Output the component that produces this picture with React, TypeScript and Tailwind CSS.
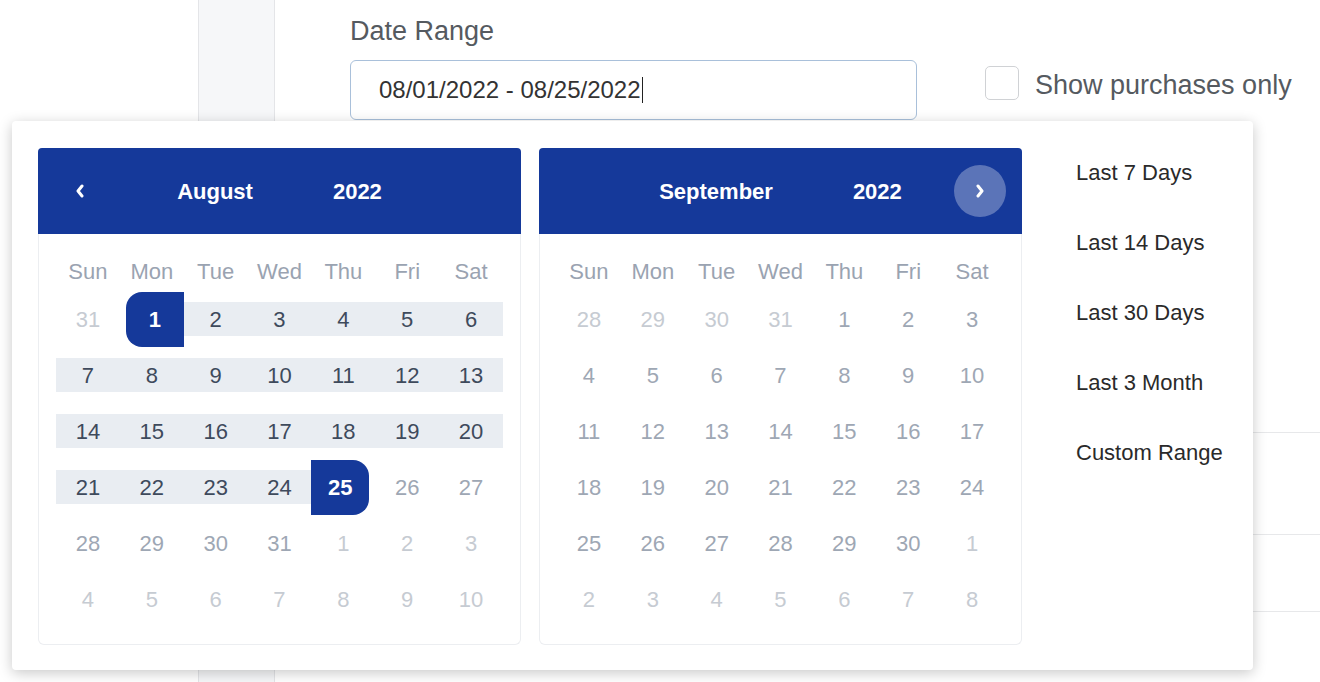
import type { ReactNode } from 'react';

type Cell = { d: number; out?: boolean };
type Mode = 'start' | 'end' | 'in' | 'none';

const DOW = ['Sun', 'Mon', 'Tue', 'Wed', 'Thu', 'Fri', 'Sat'];
const PRESETS = ['Last 7 Days', 'Last 14 Days', 'Last 30 Days', 'Last 3 Month', 'Custom Range'];

const build = (prev: number[], count: number, next: number): Cell[] => {
  const cells: Cell[] = prev.map((d) => ({ d, out: true }));
  for (let i = 1; i <= count; i++) cells.push({ d: i });
  for (let i = 1; cells.length < 42 && i <= next; i++) cells.push({ d: i, out: true });
  return cells;
};

const august = build([31], 31, 10);
const september = build([28, 29, 30, 31], 30, 8);

const Chevron = ({ dir }: { dir: 'left' | 'right' }) => (
  <svg width="10" height="14" viewBox="0 0 10 14" fill="none">
    <path
      d={dir === 'left' ? 'M7 2 L3 7 L7 12' : 'M3 2 L7 7 L3 12'}
      stroke="white"
      strokeWidth="3"
      strokeLinecap="round"
      strokeLinejoin="round"
    />
  </svg>
);

const DayCell = ({ cell, mode, muted }: { cell: Cell; mode: Mode; muted: boolean }) => {
  if (mode === 'start' || mode === 'end') {
    return (
      <div className="relative flex h-[56px] items-center justify-center">
        <div
          className={
            mode === 'start'
              ? 'absolute right-0 left-1/2 top-1/2 h-[34px] -translate-y-1/2 bg-[#e9edf2]'
              : 'absolute left-0 right-1/2 top-1/2 h-[34px] -translate-y-1/2 bg-[#e9edf2]'
          }
        />
        <div
          className={
            mode === 'start'
              ? 'relative ml-[6px] flex h-[55px] w-[58px] items-center justify-center rounded-l-[16px] bg-[#15399a] font-bold text-white'
              : 'relative mr-[6px] flex h-[55px] w-[58px] items-center justify-center rounded-r-[16px] bg-[#15399a] font-bold text-white'
          }
        >
          {cell.d}
        </div>
      </div>
    );
  }
  const color = cell.out ? 'text-[#c6cbd2]' : mode === 'in' ? 'text-[#3e4a5c]' : muted ? 'text-[#9ea7b4]' : 'text-[#9ea7b4]';
  return (
    <div className="flex h-[56px] items-center">
      <div
        className={
          mode === 'in'
            ? `flex h-[34px] w-full items-center justify-center bg-[#e9edf2] ${color}`
            : `flex h-[34px] w-full items-center justify-center ${color}`
        }
      >
        {cell.d}
      </div>
    </div>
  );
};

const Calendar = ({
  month,
  cells,
  range,
  nav,
}: {
  month: string;
  cells: Cell[];
  range?: [number, number];
  nav: 'left' | 'right';
}) => {
  const modeFor = (c: Cell): Mode => {
    if (!range || c.out) return 'none';
    if (c.d === range[0]) return 'start';
    if (c.d === range[1]) return 'end';
    if (c.d > range[0] && c.d < range[1]) return 'in';
    return 'none';
  };
  return (
    <div className="flex w-[483px] flex-col">
      <div className="flex h-[86px] items-center rounded-t-[4px] bg-[#15399a] px-[16px] text-[22px] font-bold text-white">
        <div
          className={
            nav === 'left'
              ? 'flex h-[52px] w-[52px] items-center justify-center rounded-full'
              : 'h-[52px] w-[52px]'
          }
        >
          {nav === 'left' && <Chevron dir="left" />}
        </div>
        <div className="flex flex-1 items-center justify-center gap-[80px]">
          <span>{month}</span>
          <span>2022</span>
        </div>
        <div
          className={
            nav === 'right'
              ? 'flex h-[52px] w-[52px] items-center justify-center rounded-full bg-white/30'
              : 'h-[52px] w-[52px]'
          }
        >
          {nav === 'right' && <Chevron dir="right" />}
        </div>
      </div>
      <div className="rounded-b-[6px] border border-t-0 border-[#eceef1] px-[17px] pt-[17px] pb-[17px] text-[22px]">
        <div className="grid h-[40px] grid-cols-7 items-center text-center text-[#9aa3b1]">
          {DOW.map((d) => (
            <span key={d}>{d}</span>
          ))}
        </div>
        <div className="grid grid-cols-7">
          {cells.map((c, i) => (
            <DayCell key={i} cell={c} mode={modeFor(c)} muted={!range} />
          ))}
        </div>
      </div>
    </div>
  );
};

const Row = ({ className, children }: { className: string; children?: ReactNode }) => (
  <div className={className}>{children}</div>
);

export default function App() {
  return (
    <div className="relative h-[682px] w-[1320px] overflow-hidden bg-white font-['Liberation_Sans',Arial,sans-serif]">
      <div className="flex h-full">
        <div className="w-[198px] shrink-0" />
        <div className="h-full w-[77px] shrink-0 border-x border-[#e4e5e8] bg-[#f6f7f9]" />
        <div className="flex flex-1 flex-col pl-[75px]">
          <div className="pt-[16px] text-[27px] leading-[30px] text-[#555a60]">Date Range</div>
          <div className="mt-[14px] flex items-start">
            <div className="flex h-[60px] w-[567px] items-center rounded-[6px] border border-[#a9c0da] pl-[28px] text-[24px] text-[#333]">
              08/01/2022 - 08/25/2022
              <span className="ml-[1px] h-[26px] w-[1.5px] bg-[#222]" />
            </div>
            <div className="ml-[68px] mt-[6px] h-[34px] w-[34px] rounded-[5px] border border-[#d0d2d5]" />
            <span className="ml-[16px] mt-[10px] text-[27px] leading-[30px] text-[#555a60]">Show purchases only</span>
          </div>
          <Row className="h-[313px] border-b border-[#e7e8ea]" />
          <Row className="h-[102px] border-b border-[#e7e8ea]" />
          <Row className="h-[77px] border-b border-[#e7e8ea]" />
        </div>
      </div>

      <div className="absolute left-[12px] top-[121px] flex h-[549px] w-[1241px] rounded-[4px] bg-white pl-[26px] pt-[27px] shadow-[0_3px_14px_rgba(0,0,0,0.22)]">
        <div className="flex items-start gap-[18px]">
          <Calendar month="August" cells={august} range={[1, 25]} nav="left" />
          <Calendar month="September" cells={september} nav="right" />
        </div>
        <div className="ml-[54px] flex flex-col gap-[44px] pt-[12px] text-[22px] leading-[26px] text-[#2a2a2a]">
          {PRESETS.map((p) => (
            <span key={p}>{p}</span>
          ))}
        </div>
      </div>
    </div>
  );
}
